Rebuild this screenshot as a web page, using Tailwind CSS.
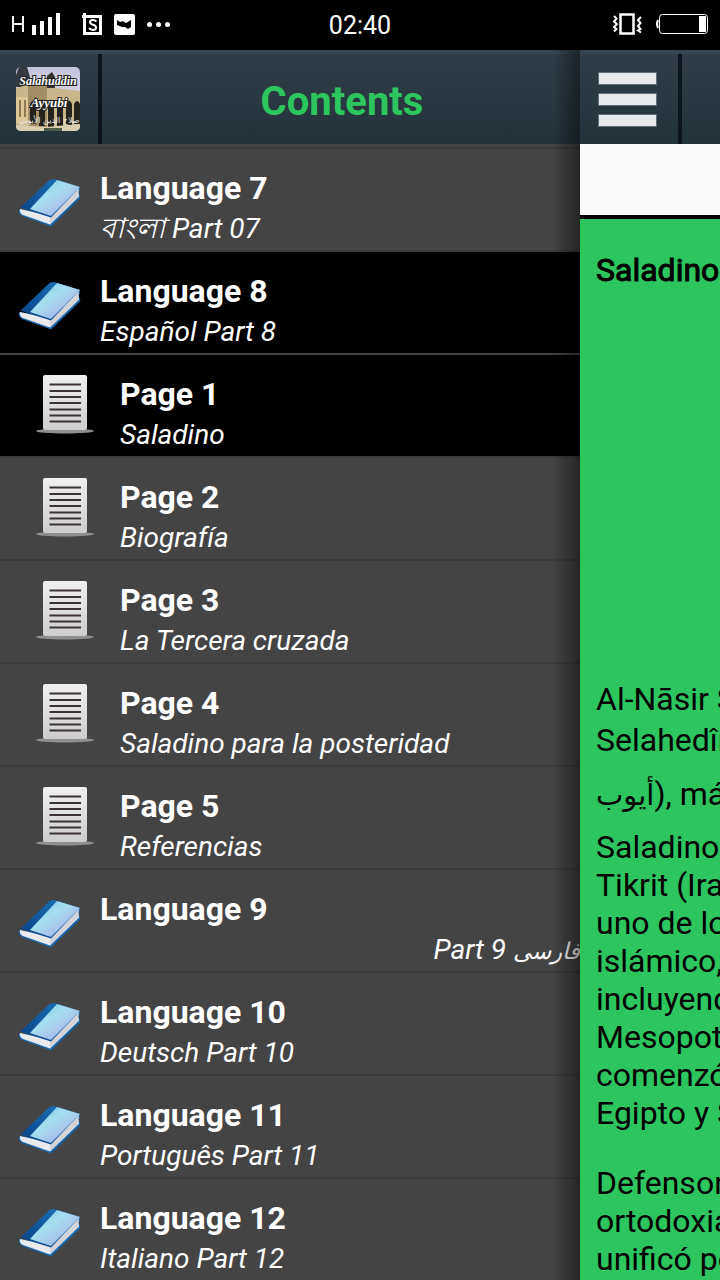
<!DOCTYPE html>
<html lang="es">
<head>
  <meta charset="UTF-8" />
  <meta name="viewport" content="width=device-width, initial-scale=1.0" />
  <title>Salahuddin Ayyubi</title>
  <script src="https://cdn.jsdelivr.net/npm/@tailwindcss/browser@4"></script>
</head>
<body class="h-screen overflow-hidden flex flex-col bg-black font-['Roboto','Noto_Sans','DejaVu_Sans',sans-serif]">

  <!-- Shared icons -->
  <svg class="absolute w-0 h-0" aria-hidden="true">
    <defs>
      <linearGradient id="cover" x1="0" y1="0" x2="1" y2="1">
        <stop offset="0" stop-color="#6fbde9" />
        <stop offset=".4" stop-color="#a5dff0" />
        <stop offset=".65" stop-color="#a7c5ee" />
        <stop offset="1" stop-color="#4c9ddd" />
      </linearGradient>
      <linearGradient id="spine" x1="1" y1="0" x2="0" y2="1">
        <stop offset="0" stop-color="#1c78bd" />
        <stop offset="1" stop-color="#0a3f83" />
      </linearGradient>
      <linearGradient id="paper" x1="0" y1="0" x2="0" y2="1">
        <stop offset="0" stop-color="#f0f0f0" />
        <stop offset="1" stop-color="#cdcdcd" />
      </linearGradient>
      <linearGradient id="sky" x1="0" y1="0" x2="0" y2="1">
        <stop offset="0" stop-color="#c3c3dc" />
        <stop offset="1" stop-color="#e9e6f2" />
      </linearGradient>
    </defs>
    <symbol id="book" viewBox="0 0 64 50">
      <path d="M1 31Q0 36 4 38L33 48.500L62.500 20L61 16L62 9L33 36Z" fill="#1767ad" />
      <path d="M2 31Q1 35 5 37L32 46.500L61 18.500Q59.500 14 61 10L33 38Z" fill="#e9e9ee" />
      <path d="M32 39V46.500L61 18.500Q59.500 14 61 10Z" fill="#d3d3d8" />
      <path d="M2 30L31 2.500Q33 .5 36 1L62 9L33 39.500L8 31.500Q4 29 2 30Z" fill="url(#spine)" />
      <path d="M39 2L62 9L33 38L12 31Z" fill="url(#cover)" />
    </symbol>
    <symbol id="page" viewBox="0 0 58 60">
      <ellipse cx="29" cy="57" rx="29" ry="2.500" fill="#8f8f8f" />
      <rect x="7" y="1" width="44" height="55" rx="2" fill="url(#paper)" />
      <path d="M13.500 10.500H45M13.500 17H45M13.500 23H45M13.500 29H45M13.500 35.500H45M13.500 41.500H45M13.500 47.500H45" stroke="#3b3234" stroke-width="2" />
    </symbol>
  </svg>

  <!-- Status bar -->
  <div class="h-[50px] shrink-0 grid grid-cols-3 items-center px-3 text-white">
    <svg class="w-[162px] h-8" viewBox="0 0 162 32" fill="#fff" aria-label="Signal and notifications">
      <path d="M1 7V23M11 7V23M1 15H11" stroke="#fff" stroke-width="2" />
      <path d="M20 16h4v10h-4zM28 12h4v14h-4zM36 8h4v18h-4zM44 4h4v22h-4z" />
      <path d="M72.500 4V24.500H88.500V7.500H70" fill="none" stroke="#fff" stroke-width="3" />
      <path d="M84.500 12.500Q83 11 81 11Q78 11 78 13.300Q78 15 81 15.700Q84 16.400 84 18.500Q84 21 81 21Q78.500 21 77 19.200" fill="none" stroke="#fff" stroke-width="2" />
      <rect x="102" y="5" width="21" height="21" rx="2" />
      <path d="M105 11L108 13L111 12L114 14L119 11V18L116 20L113 18L110 18L105 16Z" fill="#000" />
      <circle cx="137.500" cy="15.500" r="2.500" /><circle cx="146.500" cy="15.500" r="2.500" /><circle cx="155.500" cy="15.500" r="2.500" />
    </svg>
    <time class="text-center text-[25px] leading-8 pt-0.5">02:40</time>
    <svg class="justify-self-end w-[96px] h-8" viewBox="0 0 96 32" fill="none" stroke="#fff" aria-label="Vibrate, battery low">
      <rect x="8.500" y="5.500" width="13" height="19" stroke-width="2.500" />
      <path d="M2 7L4.500 9.500L2 12.500L5 15L2 18L4.500 20L2 22.500M29 8L26 11L28.500 14L26 17L28.500 20L26 21.500L29 23.500" stroke-width="2" />
      <path d="M46 11Q44 15 46 19" stroke-width="2" />
      <rect x="47.500" y="5.500" width="48" height="19" rx="3" />
      <rect x="87" y="7" width="7" height="16" fill="#fff" stroke="none" />
    </svg>
  </div>

  <div class="flex flex-1 min-h-0 overflow-hidden">

    <!-- Drawer -->
    <nav class="relative w-[580px] shrink-0 overflow-hidden bg-[#444]">
      <header class="h-[94px] flex bg-linear-to-b from-[#303d48] to-[#23333a] border-t-4 border-[#374651]">
        <div class="w-[98px] pr-0.5 flex items-center justify-center shrink-0">
          <svg class="w-16 h-16" viewBox="0 0 64 64" aria-label="Salahuddin Ayyubi">
            <clipPath id="round"><rect width="64" height="64" rx="5" /></clipPath>
            <g clip-path="url(#round)">
              <rect width="64" height="64" fill="url(#sky)" />
              <path d="M3 0H11L14 10V20H0V8Z" fill="#343a40" />
              <path d="M0 21L14 17L31 12H39V21L64 24V64H0Z" fill="#c9b78c" />
              <path d="M31 9L36 5L39 10V21H31Z" fill="#35302b" />
              <path d="M12 19H31V60H12Z" fill="#a18e67" />
              <path d="M14 37Q17 30 20 37V57H14ZM23 36Q26 29 29 36V59H23ZM32 36Q35 29 38 36V60H32ZM41 36Q44 29 47 36V59H41ZM50 37Q53 30 56 37V58H50ZM58 37Q61 31 64 37V57H58Z" fill="#25231e" />
              <path d="M0 30H12V56H0Z" fill="#dbc695" />
              <path d="M3 33H5V50H3ZM8 33H10V50H8Z" fill="#8d7a52" />
              <path d="M0 58L30 60L64 57V64H0Z" fill="#d9ceb0" />
              <path d="M28 61H46V64H28Z" fill="#4d5d48" />
              <g fill="#fff" stroke="#222" stroke-width="2" paint-order="stroke" text-anchor="middle" font-family="Liberation Serif, serif" font-style="italic" font-weight="bold">
                <text x="32" y="18" font-size="12">Salahuddin</text>
                <text x="33" y="40" font-size="13">Ayyubi</text>
              </g>
              <text x="33" y="56" font-size="8" fill="#eee" text-anchor="middle" font-family="DejaVu Sans, sans-serif">صلاح الدين الأيوبي</text>
            </g>
          </svg>
        </div>
        <h1 class="flex-1 border-l-4 border-[#0b141b] flex items-center justify-center pt-1.5 pl-0.5 text-[40px] leading-[48px] font-bold text-[#2dc65e]">Contents</h1>
      </header>

      <ul class="mt-[3px] border-t-2 border-[#3b3b3b] text-white">
        <li class="h-[103px] border-b-2 border-[#3b3b3b]">
          <a href="#language-7" class="flex h-full pl-[18px] pt-[19px]">
            <svg class="w-16 h-[50px] mt-2.5 mr-[18px]"><use href="#book" /></svg>
            <span class="flex-1"><b class="block text-[32px] leading-10">Language 7</b><i class="block text-[28px] leading-[42px]">বাংলা Part 07</i></span>
          </a>
        </li>
        <li class="h-[103px] border-b-2 border-[#444] bg-black">
          <a href="#language-8" class="flex h-full pl-[18px] pt-[19px]">
            <svg class="w-16 h-[50px] mt-2.5 mr-[18px]"><use href="#book" /></svg>
            <span class="flex-1"><b class="block text-[32px] leading-10">Language 8</b><i class="block text-[28px] leading-[42px]">Español Part 8</i></span>
          </a>
        </li>
        <li class="h-[103px] border-b-2 border-[#3b3b3b] bg-black">
          <a href="#page-1" class="flex h-full pl-9 pt-[19px]">
            <svg class="w-[58px] h-[60px] mr-[26px]"><use href="#page" /></svg>
            <span class="flex-1"><b class="block text-[32px] leading-10">Page 1</b><i class="block text-[28px] leading-[42px]">Saladino</i></span>
          </a>
        </li>
        <li class="h-[103px] border-b-2 border-[#3b3b3b]">
          <a href="#page-2" class="flex h-full pl-9 pt-[19px]">
            <svg class="w-[58px] h-[60px] mr-[26px]"><use href="#page" /></svg>
            <span class="flex-1"><b class="block text-[32px] leading-10">Page 2</b><i class="block text-[28px] leading-[42px]">Biografía</i></span>
          </a>
        </li>
        <li class="h-[103px] border-b-2 border-[#3b3b3b]">
          <a href="#page-3" class="flex h-full pl-9 pt-[19px]">
            <svg class="w-[58px] h-[60px] mr-[26px]"><use href="#page" /></svg>
            <span class="flex-1"><b class="block text-[32px] leading-10">Page 3</b><i class="block text-[28px] leading-[42px]">La Tercera cruzada</i></span>
          </a>
        </li>
        <li class="h-[103px] border-b-2 border-[#3b3b3b]">
          <a href="#page-4" class="flex h-full pl-9 pt-[19px]">
            <svg class="w-[58px] h-[60px] mr-[26px]"><use href="#page" /></svg>
            <span class="flex-1"><b class="block text-[32px] leading-10">Page 4</b><i class="block text-[28px] leading-[42px]">Saladino para la posteridad</i></span>
          </a>
        </li>
        <li class="h-[103px] border-b-2 border-[#3b3b3b]">
          <a href="#page-5" class="flex h-full pl-9 pt-[19px]">
            <svg class="w-[58px] h-[60px] mr-[26px]"><use href="#page" /></svg>
            <span class="flex-1"><b class="block text-[32px] leading-10">Page 5</b><i class="block text-[28px] leading-[42px]">Referencias</i></span>
          </a>
        </li>
        <li class="h-[103px] border-b-2 border-[#3b3b3b]">
          <a href="#language-9" class="flex h-full pl-[18px] pt-[19px]">
            <svg class="w-16 h-[50px] mt-2.5 mr-[18px]"><use href="#book" /></svg>
            <span class="flex-1"><b class="block text-[32px] leading-10">Language 9</b><i dir="rtl" class="block text-[28px] leading-[42px]"><span class="text-[23px]">فارسی</span> Part 9</i></span>
          </a>
        </li>
        <li class="h-[103px] border-b-2 border-[#3b3b3b]">
          <a href="#language-10" class="flex h-full pl-[18px] pt-[19px]">
            <svg class="w-16 h-[50px] mt-2.5 mr-[18px]"><use href="#book" /></svg>
            <span class="flex-1"><b class="block text-[32px] leading-10">Language 10</b><i class="block text-[28px] leading-[42px]">Deutsch Part 10</i></span>
          </a>
        </li>
        <li class="h-[103px] border-b-2 border-[#3b3b3b]">
          <a href="#language-11" class="flex h-full pl-[18px] pt-[19px]">
            <svg class="w-16 h-[50px] mt-2.5 mr-[18px]"><use href="#book" /></svg>
            <span class="flex-1"><b class="block text-[32px] leading-10">Language 11</b><i class="block text-[28px] leading-[42px]">Português Part 11</i></span>
          </a>
        </li>
        <li class="h-[103px] border-b-2 border-[#3b3b3b]">
          <a href="#language-12" class="flex h-full pl-[18px] pt-[19px]">
            <svg class="w-16 h-[50px] mt-2.5 mr-[18px]"><use href="#book" /></svg>
            <span class="flex-1"><b class="block text-[32px] leading-10">Language 12</b><i class="block text-[28px] leading-[42px]">Italiano Part 12</i></span>
          </a>
        </li>
      </ul>

      <!-- Shadow cast by the page -->
      <div class="absolute inset-y-0 right-0 w-7 bg-linear-to-r from-black/0 to-black/45 pointer-events-none"></div>
    </nav>

    <!-- Page pushed aside by the drawer -->
    <main class="w-full shrink-0 flex flex-col bg-[#2dc65e]">
      <header class="h-[94px] shrink-0 flex bg-linear-to-b from-[#303d48] to-[#23333a] border-t-4 border-[#374651]">
        <button type="button" aria-label="Menu" class="w-[98px] pl-[19px] flex flex-col justify-center gap-2.5">
          <span class="w-[57px] h-[11px] bg-[#e8e9eb] outline outline-[#60707a]"></span>
          <span class="w-[57px] h-[11px] bg-[#e8e9eb] outline outline-[#60707a]"></span>
          <span class="w-[57px] h-[11px] bg-[#e8e9eb] outline outline-[#60707a]"></span>
        </button>
        <div class="flex-1 border-l-4 border-[#0b141b]"></div>
      </header>
      <div class="h-[75px] shrink-0 bg-[#fafafa] border-b-4 border-black"></div>
      <article class="px-4 pt-8 text-[32px] leading-[38px] text-black whitespace-nowrap">
        <h2 class="[-webkit-text-stroke:1px_black] pb-[390px]">Saladino</h2>
        <p>
          <span class="block leading-[41px]">Al-Nāsir Salāh ad-Dīn Yūsuf</span>
          <span class="block leading-[41px]">Selahedînê Eyûbî; en árabe,</span>
          <span class="block leading-[66px]"><bdi class="text-[29px]">أيوب</bdi>), más conocido como</span>
          Saladino, nacido en<br>
          Tikrit (Iraq) en 1138, fue<br>
          uno de los grandes del mundo<br>
          islámico, sultán de Egipto,<br>
          incluyendo Siria, Palestina,<br>
          Mesopotamia y Yemen, donde<br>
          comenzó la dinastía de<br>
          Egipto y Siria.
        </p>
        <p class="mt-8">
          Defensor de la religión y<br>
          ortodoxia, el sunismo, y<br>
          unificó política y religiosamente
        </p>
      </article>
    </main>
  </div>
</body>
</html>
